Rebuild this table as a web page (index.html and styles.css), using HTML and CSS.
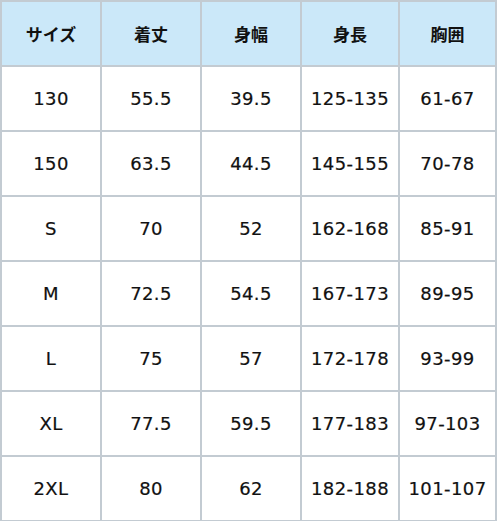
FILE: index.html
```html
<!DOCTYPE html>
<html lang="ja">
<head>
<meta charset="utf-8">
<link rel="stylesheet" href="styles.css">
</head>
<body>
<div class="size-table">
  <div class="cell head">サイズ</div>
  <div class="cell head">着丈</div>
  <div class="cell head">身幅</div>
  <div class="cell head">身長</div>
  <div class="cell head">胸囲</div>

  <div class="cell">130</div><div class="cell">55.5</div><div class="cell">39.5</div><div class="cell">125-135</div><div class="cell">61-67</div>
  <div class="cell">150</div><div class="cell">63.5</div><div class="cell">44.5</div><div class="cell">145-155</div><div class="cell">70-78</div>
  <div class="cell">S</div><div class="cell">70</div><div class="cell">52</div><div class="cell">162-168</div><div class="cell">85-91</div>
  <div class="cell">M</div><div class="cell">72.5</div><div class="cell">54.5</div><div class="cell">167-173</div><div class="cell">89-95</div>
  <div class="cell">L</div><div class="cell">75</div><div class="cell">57</div><div class="cell">172-178</div><div class="cell">93-99</div>
  <div class="cell">XL</div><div class="cell">77.5</div><div class="cell">59.5</div><div class="cell">177-183</div><div class="cell">97-103</div>
  <div class="cell">2XL</div><div class="cell">80</div><div class="cell">62</div><div class="cell">182-188</div><div class="cell">101-107</div>
</div>
</body>
</html>
```

FILE: styles.css
```css
html, body {
  margin: 0;
  padding: 0;
  background: #ffffff;
}

.size-table {
  display: grid;
  grid-template-columns: 98px 98px 98px 96px 95px;
  grid-auto-rows: 63px;
  gap: 2px;
  padding: 2px;
  width: max-content;
  background: #c3cbd2;
  font-family: "DejaVu Sans", "Noto Sans CJK JP", sans-serif;
  color: #111111;
}

.cell {
  display: flex;
  align-items: center;
  justify-content: center;
  background: #ffffff;
  font-size: 18px;
  font-weight: 400;
  letter-spacing: 0.4px;
  -webkit-text-stroke: 0.2px #111111;
}

.cell.head {
  background: #cbe8f9;
  font-family: "Noto Sans CJK JP", sans-serif;
  font-size: 17px;
  font-weight: 700;
  letter-spacing: 0;
  -webkit-text-stroke: 0;
}
```
